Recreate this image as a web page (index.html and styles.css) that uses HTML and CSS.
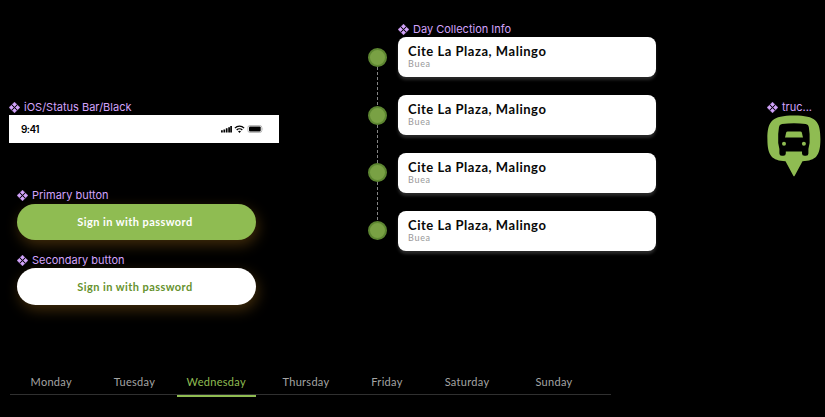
FILE: index.html
```html
<!DOCTYPE html>
<html lang="en">
<head>
<meta charset="utf-8">
<title>Components</title>
<link rel="stylesheet" href="styles.css">
</head>
<body>
<svg class="defs" aria-hidden="true">
  <symbol id="component" viewBox="0 0 12 12">
    <path d="M6 0.2 8.4 2.6 6 5 3.6 2.6zM6 7 8.4 9.4 6 11.8 3.6 9.4zM2.6 3.6 5 6 2.6 8.4 0.2 6zM9.4 3.6 11.8 6 9.4 8.4 7 6z" fill="#d2a3fb" stroke="#d2a3fb" stroke-width=".7" stroke-linejoin="round"/>
  </symbol>
</svg>
<main class="board">
  <div class="top">
    <section class="left">
      <div class="label"><svg><use href="#component"/></svg><span>iOS/Status Bar/Black</span></div>
      <div class="status">
        <span class="time">9:41</span>
        <svg class="signals" width="44" height="10" viewBox="0 0 44 10">
          <path d="M1.900 6.300v2.200M4.300 5.400v3.100M6.700 4.300v4.200M9.100 3.200v5.300M11.100 2v6.500" stroke="#000" stroke-width="1.700"/>
          <g fill="none" stroke="#000" stroke-width="1.300">
            <path d="M14.900 4.200C17.400 1.300 21.600 1.300 24.100 4.200M16.700 6C18.200 4.500 20.800 4.500 22.300 6"/>
          </g>
          <path d="M18 7.300Q19.500 6.200 21 7.300L19.500 9z"/>
          <rect x="27.900" y="1.500" width="13.900" height="7" rx="2" fill="#fff" stroke="#aaa" stroke-width=".8"/>
          <rect x="29" y="2.500" width="11.700" height="5" rx="1"/>
          <path d="M42.600 3.900q1 1.100 0 2.200z" fill="#999"/>
        </svg>
      </div>
      <div class="actions">
        <div class="label"><svg><use href="#component"/></svg><span>Primary button</span></div>
        <button class="button primary">Sign in with password</button>
        <div class="label second"><svg><use href="#component"/></svg><span>Secondary button</span></div>
        <button class="button secondary">Sign in with password</button>
      </div>
    </section>

    <section class="schedule">
      <div class="timeline">
        <i class="dot"></i><i class="dash"></i><i class="dot"></i><i class="dash"></i><i class="dot"></i><i class="dash"></i><i class="dot"></i>
      </div>
      <div class="cards">
        <div class="label"><svg><use href="#component"/></svg><span>Day Collection Info</span></div>
        <article class="card"><h2>Cite La Plaza, Malingo</h2><p>Buea</p></article>
        <article class="card"><h2>Cite La Plaza, Malingo</h2><p>Buea</p></article>
        <article class="card"><h2>Cite La Plaza, Malingo</h2><p>Buea</p></article>
        <article class="card"><h2>Cite La Plaza, Malingo</h2><p>Buea</p></article>
      </div>
    </section>

    <section class="truck">
      <div class="label"><svg><use href="#component"/></svg><span>truc...</span></div>
      <svg class="pin" width="54" height="62" viewBox="0 0 54 62">
        <path d="M.4 24C.4 6 5 .5 27 .5S53.400 6 53.400 24C53.400 41 49 45.500 35.500 46.300L27.700 60.800Q27 61.800 26.300 60.800L18.500 46.300C5 45.500.4 41 .4 24z" fill="#8fbc52"/>
        <path d="M15 9Q27 7.400 38.800 9Q41.600 9.500 41.800 12L42.600 19V28L41.400 34V38.500Q41.400 40.800 39 40.800H37.500Q35 40.800 35 38.500V36.400H18.800V38.500Q18.800 40.800 16.300 40.800H14.800Q12.400 40.800 12.400 38.500V34L11.200 28V19L12 12Q12.200 9.500 15 9z"/>
        <path d="M20.600 16.500H33.400Q34.500 16.500 34.800 17.600L36 22.500H18L19.200 17.600Q19.500 16.500 20.600 16.500z" fill="#8fbc52"/>
        <circle cx="17" cy="28.700" r="2" fill="#8fbc52"/><circle cx="36.900" cy="28.700" r="2" fill="#8fbc52"/>
      </svg>
    </section>
  </div>

  <nav class="tabs">
    <span class="tab">Monday</span><span class="tab">Tuesday</span><span class="tab active">Wednesday</span><span class="tab">Thursday</span><span class="tab">Friday</span><span class="tab">Saturday</span><span class="tab">Sunday</span>
  </nav>
</main>
</body>
</html>
```
FILE: styles.css
```css
* { box-sizing: border-box; }
body { margin: 0; background: #000; }
.defs { display: block; width: 0; height: 0; }
.board { width: 825px; height: 417px; overflow: hidden; font-family: Lato, sans-serif; }
.top { display: flex; height: 371px; padding-left: 9px; }

.label { display: flex; align-items: center; gap: 4px; height: 16px; font: 11px/16px Inter, sans-serif; color: #d2a3fb; white-space: nowrap; }
.label svg { width: 11px; height: 11px; flex: none; }

.left { width: 359px; padding-top: 99px; }
.status { display: flex; align-items: center; justify-content: space-between; width: 270px; height: 28px; padding: 0 15px 0 12px; background: #fff; }
.time { font: 600 10px/14px Inter, sans-serif; letter-spacing: -.55px; }
.actions { width: 247px; padding: 44px 0 0 8px; }
.second { margin-top: 12px; }
.button { display: block; width: 239px; height: 37px; padding: 0 3px 0 0; border: 0; border-radius: 19px; font: 700 11px/16px Lato, sans-serif; letter-spacing: .43px; box-shadow: 2px 5px 14px rgba(255, 170, 40, .25); }
.actions .primary { margin-top: .5px; height: 36.5px; }
.primary { background: #8fbc52; color: #fff; }
.secondary { background: #fff; color: #66922e; }

.schedule { display: flex; gap: 11px; width: 399px; padding-top: 21px; }
.timeline { display: flex; flex-direction: column; align-items: center; width: 19px; padding-top: 27px; }
.dot { flex: none; width: 19px; height: 19px; border: 2px solid #5d8631; border-radius: 50%; background: #79a144; }
.dash { flex: none; width: 1px; height: 38.7px; background: repeating-linear-gradient(#858585 0 3px, transparent 3px 5px); }
.cards { width: 257.5px; }
.card { height: 40px; margin-bottom: 18.1px; padding: 6px 10px 0; border-radius: 8px; background: #fff; box-shadow: 0 3px 3px #292929; }
.card h2 { margin: 0; font: 700 13px/16px Lato, sans-serif; letter-spacing: .53px; color: #080808; }
.card p { margin: 0; font-size: 9px; line-height: 10px; letter-spacing: .7px; color: #999; }

.truck { width: 54px; padding-top: 99px; }
.pin { display: block; }

.tabs { display: grid; grid-template-columns: 82.5px 84px 79.5px 100px 62px 98px 95px; width: 601px; height: 26px; margin-left: 10px; background: linear-gradient(#303030, #303030) 0 23px / 100% 1px no-repeat; }
.tab { padding-top: 3px; text-align: center; font-size: 11px; line-height: 16px; letter-spacing: .3px; color: #a4a4a4; }
.tab:last-child { padding-right: 19px; }
.active { color: #8fbc52; border-bottom: 2px solid #8fbc52; }
```
